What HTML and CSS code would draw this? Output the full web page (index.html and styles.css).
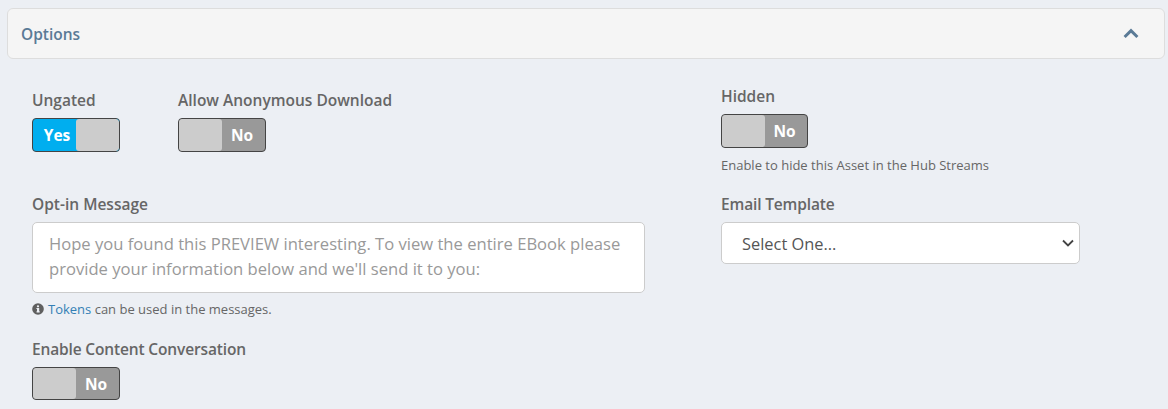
FILE: index.html
```html
<!DOCTYPE html>
<html lang="en">
<head>
<meta charset="utf-8">
<title>Options</title>
<link rel="stylesheet" href="styles.css">
</head>
<body>
<section class="panel">
  <header class="panel-head">
    <h2 class="panel-title">Options</h2>
    <svg class="chevron" width="16" height="11" viewBox="0 0 16 11" aria-hidden="true"><path d="M1.6 9 8 2.6 14.400 9" fill="none" stroke="#5a7a96" stroke-width="3"/></svg>
  </header>
  <div class="form">
    <div class="col-left">
      <div class="switch-row">
        <div class="field">
          <div class="label">Ungated</div>
          <div class="switch on"><span class="state">Yes</span><span class="knob"></span></div>
        </div>
        <div class="field">
          <div class="label">Allow Anonymous Download</div>
          <div class="switch"><span class="knob"></span><span class="state">No</span></div>
        </div>
      </div>
      <div class="field message">
        <div class="label">Opt-in Message</div>
        <textarea class="input textarea" rows="2" placeholder="Hope you found this PREVIEW interesting. To view the entire EBook please provide your information below and we'll send it to you:"></textarea>
        <p class="help tokens">
          <svg class="info" width="12" height="12" viewBox="0 0 12 12" aria-hidden="true"><circle cx="6" cy="6" r="5.800" fill="#5f5f5f"/><rect x="5" y="5" width="2.200" height="4.200" fill="#eceff4"/><rect x="4.400" y="8.400" width="3.400" height="1" fill="#eceff4"/><rect x="4.400" y="5" width="2" height="1" fill="#eceff4"/><circle cx="6" cy="3.300" r="1.150" fill="#eceff4"/></svg>
          <span><a class="link" href="#">Tokens</a> can be used in the messages.</span>
        </p>
      </div>
      <div class="field conversation">
        <div class="label tight">Enable Content Conversation</div>
        <div class="switch short"><span class="knob"></span><span class="state">No</span></div>
      </div>
    </div>
    <div class="col-right">
      <div class="field">
        <div class="label">Hidden</div>
        <div class="switch narrow"><span class="knob"></span><span class="state">No</span></div>
        <p class="help hide-help">Enable to hide this Asset in the Hub Streams</p>
      </div>
      <div class="field template">
        <div class="label tight">Email Template</div>
        <select class="input select"><option>Select One...</option></select>
      </div>
    </div>
  </div>
</section>
</body>
</html>
```
FILE: styles.css
```css
* { box-sizing: border-box; }
html, body { height: 100%; }
body {
  margin: 0;
  padding: 8px 3px 0 7px;
  background: #eceff4;
  font-family: "Open Sans", "Noto Sans", sans-serif;
  color: #666;
  overflow: hidden;
}
.panel-head {
  height: 51px;
  display: flex;
  align-items: center;
  justify-content: space-between;
  padding: 0 25px 0 13px;
  background: #f5f5f5;
  border: 1px solid #ddd;
  border-radius: 6px;
}
.panel-title {
  margin: 0;
  font-size: 15.500px;
  font-weight: 600;
  color: #5a7a96;
}
.form {
  display: grid;
  grid-template-columns: 689px 359px;
  padding: 31px 0 0 25px;
}
.switch-row { display: flex; gap: 58px; }
.label {
  font-size: 15.500px;
  font-weight: 600;
  line-height: 20px;
  color: #666;
  margin-bottom: 8px;
}
.label.tight { letter-spacing: -0.15px; }
.switch {
  width: 88px;
  height: 34px;
  display: flex;
  border: 1px solid #444;
  border-radius: 4px;
  overflow: hidden;
  background: #999;
  font-size: 15.500px;
  font-weight: 700;
  color: #fff;
}
.switch.short { height: 33px; }
.switch.narrow { width: 87px; }
.switch.on { background: #00aeef; }
.knob {
  width: 43px;
  background: #ccc;
  border-radius: 3px;
  flex: none;
}
.state {
  flex: 1;
  display: flex;
  align-items: center;
  justify-content: center;
  padding-right: 3px;
}
.switch.on .state { padding: 0 0 0 5px; }
.message { margin-top: 42px; }
.input {
  display: block;
  background: #fff;
  border: 1px solid #ccc;
  border-radius: 5px;
  font-family: inherit;
  font-size: 16.400px;
  color: #555;
}
.textarea {
  width: 613px;
  height: 71px;
  padding: 8px 16px;
  font-size: 16.600px;
  line-height: 25px;
  resize: none;
  outline: none;
}
.textarea::placeholder { color: #999; opacity: 1; }
.help {
  margin: 0;
  font-size: 13px;
  line-height: 18px;
  color: #666;
}
.tokens { margin-top: 7px; display: flex; align-items: center; gap: 4px; }
.link { color: #337fb5; text-decoration: none; }
.conversation { margin-top: 21px; }
.hide-help { margin-top: 8px; }
.col-right { margin-top: -4px; }
.template { margin-top: 20px; }
.select {
  width: 359px;
  height: 42px;
  padding: 0 16px 0 20px;
  appearance: none;
  background: #fff url("data:image/svg+xml,%3Csvg xmlns='http://www.w3.org/2000/svg' width='12' height='8' viewBox='0 0 12 8'%3E%3Cpath d='M1 1.500l5 5 5-5' fill='none' stroke='%23444' stroke-width='1.800'/%3E%3C/svg%3E") no-repeat 340px center;
}
```
